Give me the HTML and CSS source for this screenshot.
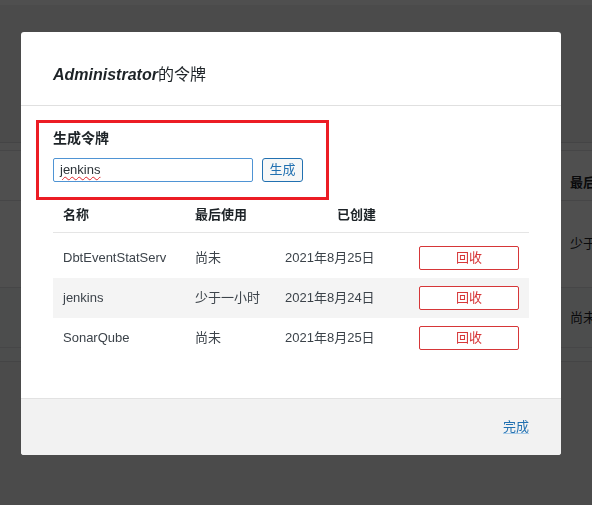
FILE: index.html
```html
<!DOCTYPE html>
<html lang="zh-CN">
<head>
<meta charset="utf-8">
<title>Administrator的令牌</title>
<link rel="stylesheet" href="styles.css">
</head>
<body>
<div class="page">
  <div class="topbar"></div>
  <div class="page-body">
    <div class="bg-strip"></div>
    <div class="bg-row bg-head"><div></div><div class="bg-cell">最后使用</div></div>
    <div class="bg-row bg-r1"><div></div><div class="bg-cell">少于一小时</div></div>
    <div class="bg-row bg-r2"><div></div><div class="bg-cell">尚未</div></div>
    <div class="bg-row bg-r3"><div></div><div></div></div>
  </div>
</div>
<div class="backdrop"></div>
<div class="modal">
  <div class="modal-header">
    <h1 class="modal-title"><em>Administrator</em>的令牌</h1>
  </div>
  <div class="modal-body">
    <div class="gen-box">
      <div class="gen-label">生成令牌</div>
      <div class="gen-form">
        <div class="gen-input" role="textbox" contenteditable="true"><span class="misspelled">jenkins</span></div>
        <button class="gen-btn" type="button">生成</button>
      </div>
    </div>
    <div class="tokens">
      <div class="t-head">
        <div class="cell">名称</div>
        <div class="cell">最后使用</div>
        <div class="cell cell-created">已创建</div>
        <div class="cell"></div>
      </div>
      <div class="t-row">
        <div class="cell">DbtEventStatServ</div>
        <div class="cell">尚未</div>
        <div class="cell">2021年8月25日</div>
        <div class="cell"><button class="revoke" type="button">回收</button></div>
      </div>
      <div class="t-row alt">
        <div class="cell">jenkins</div>
        <div class="cell">少于一小时</div>
        <div class="cell">2021年8月24日</div>
        <div class="cell"><button class="revoke" type="button">回收</button></div>
      </div>
      <div class="t-row">
        <div class="cell">SonarQube</div>
        <div class="cell">尚未</div>
        <div class="cell">2021年8月25日</div>
        <div class="cell"><button class="revoke" type="button">回收</button></div>
      </div>
    </div>
  </div>
  <div class="modal-footer">
    <a class="done" href="#">完成</a>
  </div>
</div>
</body>
</html>
```
FILE: styles.css
```css
* { box-sizing: border-box; }

body {
  margin: 0;
  font-family: "Liberation Sans", "Noto Sans CJK SC", sans-serif;
  font-size: 13px;
  line-height: 20px;
  color: #3c434a;
  background: #f0f0f1;
}

/* underlying page */
.page { height: 505px; overflow: hidden; }
.topbar { height: 5px; background: #fff; }
.page-body { padding-top: 137px; }
.bg-strip { height: 8px; border-top: 1px solid #dcdcde; background: #fafafa; }
.bg-row {
  display: grid;
  grid-template-columns: 560px 1fr;
  background: #fff;
  border-top: 1px solid #e2e2e4;
}
.bg-cell { padding: 0 10px; line-height: 20px; color: #1d2327; white-space: nowrap; }
.bg-head { height: 50px; padding-top: 22px; font-weight: 700; }
.bg-r1 { height: 87px; align-items: center; }
.bg-r2 { height: 60px; align-items: center; background: #f6f7f7; }
.bg-r3 { height: 15px; border-bottom: 1px solid #dcdcde; background: #f6f7f7; }

.backdrop {
  position: fixed;
  inset: 0;
  background: rgba(0, 0, 0, 0.69);
}

/* modal */
.modal {
  position: absolute;
  left: 21px;
  top: 32px;
  width: 540px;
  background: #fff;
  border-radius: 3px;
  overflow: hidden;
}
.modal-header {
  padding: 31px 32px 18px;
  border-bottom: 1px solid #e0e0e0;
}
.modal-title {
  margin: 0;
  font-size: 16px;
  line-height: 24px;
  font-weight: 400;
  color: #1d2327;
}
.modal-title em { font-weight: 700; }

.modal-body { padding: 14px 32px 40px; }

.gen-box {
  margin-left: -17px;
  width: 293px;
  height: 80px;
  border: 3px solid #ec1c24;
  padding: 5px 14px 0;
}
.gen-label {
  font-size: 14px;
  line-height: 20px;
  font-weight: 700;
  color: #1d2327;
}
.gen-form { display: flex; gap: 9px; margin-top: 10px; }
.gen-input {
  width: 200px;
  height: 24px;
  padding: 0 6px;
  border: 1px solid #4f94d4;
  border-radius: 2px;
  font-size: 13px;
  line-height: 22px;
  color: #2c3338;
  background: #fff;
  outline: none;
  white-space: nowrap;
  overflow: hidden;
}
.misspelled {
  text-decoration: underline wavy #e0262d;
  text-decoration-thickness: 1px;
  text-underline-offset: 2px;
}
.gen-btn {
  width: 41px;
  height: 24px;
  margin: 0;
  padding: 0;
  border: 1px solid #2271b1;
  border-radius: 3px;
  background: #f6f7f7;
  color: #2271b1;
  font-family: "Liberation Sans", "Noto Sans CJK SC", sans-serif;
  font-size: 13px;
  line-height: 20px;
}

.t-head, .t-row {
  display: grid;
  grid-template-columns: 132px 90px 134px 120px;
}
.t-head {
  height: 33px;
  padding-top: 5px;
  border-bottom: 1px solid #e5e5e5;
  margin-bottom: 5px;
  font-weight: 700;
  color: #1d2327;
}
.t-row { height: 40px; align-items: center; color: #3c434a; }
.t-row.alt { background: #f4f4f4; }
.cell { padding: 0 10px; white-space: nowrap; line-height: 20px; }
.cell-created { padding-left: 62px; }

.revoke {
  display: block;
  width: 100px;
  height: 24px;
  margin: 0;
  padding: 0;
  border: 1px solid #d63638;
  border-radius: 2px;
  background: #fff;
  color: #d63638;
  font-family: "Liberation Sans", "Noto Sans CJK SC", sans-serif;
  font-size: 13px;
  line-height: 20px;
}

.modal-footer {
  height: 57px;
  border-top: 1px solid #e2e2e2;
  background: #f2f2f2;
  display: flex;
  justify-content: flex-end;
  align-items: center;
  padding: 0 32px;
}
.done {
  color: #2271b1;
  font-size: 13px;
  text-decoration: underline;
  text-decoration-color: #a9cbe8;
  text-underline-offset: 2px;
}
```
